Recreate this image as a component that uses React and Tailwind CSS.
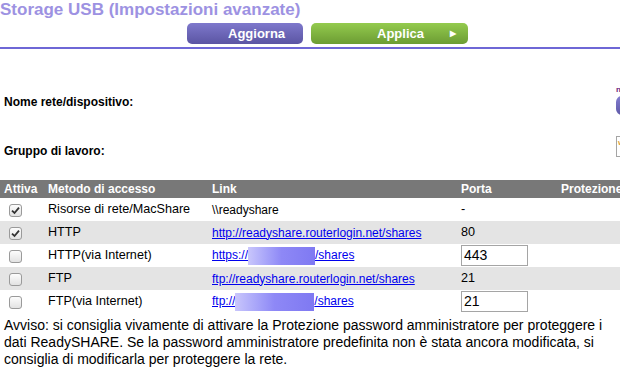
import React from 'react'

function Check({ on }) {
  return (
    <span className="inline-flex h-[13px] w-[13px] items-center justify-center rounded-[3px] border border-[#9a9a9a] bg-gradient-to-b from-[#fdfdfd] to-[#e2e2e2] align-middle">
      {on && (
        <svg width="9" height="9" viewBox="0 0 9 9">
          <path d="M1 4.6 L3.5 7 L8 1.6" fill="none" stroke="#333" strokeWidth="1.8" />
        </svg>
      )}
    </span>
  )
}

function Blur({ w }) {
  return <span className="inline-block h-[18px] align-middle bg-gradient-to-r from-[#c9c6fb] via-[#8e88f6] to-[#7f79f2]" style={{ width: w }} />
}

const rows = [
  { on: true, name: 'Risorse di rete/MacShare', link: <span>\\readyshare</span>, port: '-' },
  { on: true, name: 'HTTP', link: <a className="text-[#0000ee] underline">http://readyshare.routerlogin.net/shares</a>, port: '80' },
  { on: false, name: 'HTTP(via Internet)', link: <a className="text-[#0000ee] underline">https://<Blur w={67} />/shares</a>, port: '443', input: true },
  { on: false, name: 'FTP', link: <a className="text-[#0000ee] underline">ftp://readyshare.routerlogin.net/shares</a>, port: '21' },
  { on: false, name: 'FTP(via Internet)', link: <a className="text-[#0000ee] underline">ftp://<Blur w={79} />/shares</a>, port: '21', input: true },
]

export default function App() {
  return (
    <div className="w-[620px] h-[376px] overflow-hidden bg-white text-black" style={{ fontFamily: '"Liberation Sans", Arial, sans-serif' }}>
      <h1 className="h-[21px] text-[17px] font-bold leading-[19px] text-[#9d92e2]">Storage USB (Impostazioni avanzate)</h1>
      <div className="flex h-[26px] items-start gap-[8px] pl-[187px] pt-[2px]">
        <button className="h-[21px] w-[116px] rounded-[5px] bg-gradient-to-b from-[#7e78cc] to-[#5b55a3] pl-[41px] text-left text-[13px] font-bold text-white">Aggiorna</button>
        <button className="flex h-[21px] w-[157px] items-center rounded-[5px] bg-gradient-to-b from-[#94cb4e] to-[#6c9c33] pl-[66px] text-[13px] font-bold text-white">
          Applica
          <span className="ml-[26px] text-[8px]">▶</span>
        </button>
      </div>
      <div className="h-[2px] bg-[#6e67d6]" />

      <div className="grid grid-cols-[616px_40px] text-[12px] font-bold">
        <div className="pl-[4px] pt-[46px] leading-[14px]">Nome rete/dispositivo:</div>
        <div className="pt-[37px]">
          <div className="h-[8px] text-[8px] leading-[8px] text-[#6b1a7a]">n</div>
          <div className="mt-[2px] h-[19px] w-[30px] rounded-[6px] bg-gradient-to-b from-[#837dd0] to-[#5f59a8]" />
        </div>
        <div className="pl-[4px] pt-[29px] leading-[14px]">Gruppo di lavoro:</div>
        <div className="pt-[21px]">
          <div className="h-[21px] w-[30px] border border-[#a5a5a5] pl-[1px] text-[8px] text-[#e0a040]">w</div>
        </div>
      </div>

      <table className="mt-[22px] w-[720px] table-fixed border-collapse text-[12px]">
        <colgroup>
          <col className="w-[44px]" />
          <col className="w-[164px]" />
          <col className="w-[249px]" />
          <col className="w-[100px]" />
          <col />
        </colgroup>
        <thead>
          <tr className="h-[18px] bg-[#787878] text-left font-bold text-white">
            <th className="pl-[4px]">Attiva</th>
            <th className="pl-[4px]">Metodo di accesso</th>
            <th className="pl-[4px]">Link</th>
            <th className="pl-[4px]">Porta</th>
            <th className="pl-[4px]">Protezione</th>
          </tr>
        </thead>
        <tbody>
          {rows.map((r, i) => (
            <tr key={i} className={`h-[23px] ${i % 2 ? 'bg-[#e4e4e4]' : 'bg-white'}`}>
              <td className="pl-[9px]"><Check on={r.on} /></td>
              <td className="pl-[4px] text-[12.6px]">{r.name}</td>
              <td className="pl-[4px]">{r.link}</td>
              <td className="pl-[4px] text-[12.6px]">
                {r.input ? (
                  <div className="flex h-[21px] w-[67px] items-center border border-[#a5a5a5] bg-white pl-[2px] text-[14px]">{r.port}</div>
                ) : (
                  r.port
                )}
              </td>
              <td />
            </tr>
          ))}
        </tbody>
      </table>

      <p className="mt-[4px] pl-[4px] pr-[4px] text-[14px] leading-[17px]">
        Avviso: si consiglia vivamente di attivare la Protezione password amministratore per proteggere i dati ReadySHARE. Se la password amministratore predefinita non è stata ancora modificata, si consiglia di modificarla per proteggere la rete.
      </p>
    </div>
  )
}
